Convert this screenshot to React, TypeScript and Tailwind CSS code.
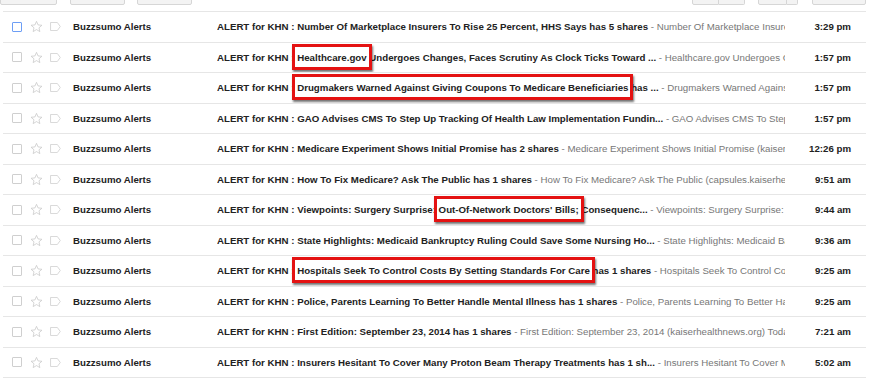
import React from "react";

type Row = {
  before: string;
  mark?: string;
  after?: string;
  snippet: string;
  time: string;
  focus?: boolean;
};

const rows: Row[] = [
  {
    before: "ALERT for KHN : Number Of Marketplace Insurers To Rise 25 Percent, HHS Says has 5 shares",
    snippet: "Number Of Marketplace Insurers To Rise 25 Percent",
    time: "3:29 pm",
    focus: true,
  },
  {
    before: "ALERT for KHN : ",
    mark: "Healthcare.gov",
    after: " Undergoes Changes, Faces Scrutiny As Clock Ticks Toward ...",
    snippet: "Healthcare.gov Undergoes Changes",
    time: "1:57 pm",
  },
  {
    before: "ALERT for KHN : ",
    mark: "Drugmakers Warned Against Giving Coupons To Medicare Beneficiaries",
    after: " has ...",
    snippet: "Drugmakers Warned Against Giving",
    time: "1:57 pm",
  },
  {
    before: "ALERT for KHN : GAO Advises CMS To Step Up Tracking Of Health Law Implementation Fundin...",
    snippet: "GAO Advises CMS To Step Up",
    time: "1:57 pm",
  },
  {
    before: "ALERT for KHN : Medicare Experiment Shows Initial Promise has 2 shares",
    snippet: "Medicare Experiment Shows Initial Promise (kaiserhealthnews.org)",
    time: "12:26 pm",
  },
  {
    before: "ALERT for KHN : How To Fix Medicare? Ask The Public has 1 shares",
    snippet: "How To Fix Medicare? Ask The Public (capsules.kaiserhealthnews.org)",
    time: "9:51 am",
  },
  {
    before: "ALERT for KHN : Viewpoints: Surgery Surprise: ",
    mark: "Out-Of-Network Doctors' Bills;",
    after: " Consequenc...",
    snippet: "Viewpoints: Surgery Surprise: Out-Of-Network",
    time: "9:44 am",
  },
  {
    before: "ALERT for KHN : State Highlights: Medicaid Bankruptcy Ruling Could Save Some Nursing Ho...",
    snippet: "State Highlights: Medicaid Bankruptcy",
    time: "9:36 am",
  },
  {
    before: "ALERT for KHN : ",
    mark: "Hospitals Seek To Control Costs By Setting Standards For Care",
    after: " has 1 shares",
    snippet: "Hospitals Seek To Control Costs",
    time: "9:25 am",
  },
  {
    before: "ALERT for KHN : Police, Parents Learning To Better Handle Mental Illness has 1 shares",
    snippet: "Police, Parents Learning To Better Handle",
    time: "9:25 am",
  },
  {
    before: "ALERT for KHN : First Edition: September 23, 2014 has 1 shares",
    snippet: "First Edition: September 23, 2014 (kaiserhealthnews.org) Today's",
    time: "7:21 am",
  },
  {
    before: "ALERT for KHN : Insurers Hesitant To Cover Many Proton Beam Therapy Treatments has 1 sh...",
    snippet: "Insurers Hesitant To Cover Many",
    time: "5:02 am",
  },
];

function StarIcon() {
  return (
    <svg viewBox="0 0 24 24" className="w-[13px] h-[13px] shrink-0" aria-hidden="true">
      <path
        d="M12 2.5l2.9 6.6 7.1.6-5.4 4.7 1.6 7-6.2-3.7-6.2 3.7 1.6-7L2 9.7l7.1-.6z"
        fill="none"
        stroke="#c8c8c8"
        strokeWidth="1.4"
        strokeLinejoin="miter"
      />
    </svg>
  );
}

function LabelIcon() {
  return (
    <svg viewBox="0 0 12 10" className="w-[11px] h-[9px] shrink-0" aria-hidden="true">
      <path
        d="M0.5 0.5h7.5l3.3 4.5-3.3 4.5H0.5z"
        fill="none"
        stroke="#d4d4d4"
        strokeWidth="1"
      />
    </svg>
  );
}

function Toolbar() {
  return (
    <div className="h-[5px] overflow-hidden flex items-end">
      <div className="w-[57px] h-[24px] bg-[#f3f3f3] border border-[#d6d6d6] rounded-[2px]" />
      <div className="ml-[13px] w-[55px] h-[24px] bg-[#f3f3f3] border border-[#d6d6d6] rounded-[2px]" />
      <div className="ml-[12px] w-[55px] h-[24px] bg-[#f3f3f3] border border-[#d6d6d6] rounded-[2px]" />
      <div className="ml-auto flex">
        <div className="w-[27px] h-[24px] bg-[#f3f3f3] border border-[#d6d6d6] rounded-l-[2px]" />
        <div className="w-[26px] h-[24px] bg-[#f3f3f3] border border-l-0 border-[#d6d6d6] rounded-r-[2px]" />
      </div>
      <div className="ml-[13px] flex">
        <div className="w-[29px] h-[24px] bg-[#f3f3f3] border border-[#d6d6d6] rounded-l-[2px]" />
        <div className="w-[11px] h-[24px] bg-[#f3f3f3] border border-l-0 border-[#d6d6d6] rounded-r-[2px]" />
      </div>
      <div className="ml-[14px] mr-[14px] w-[54px] h-[24px] bg-[#f3f3f3] border border-[#d6d6d6] rounded-[2px]" />
    </div>
  );
}

function MailRow({ row }: { row: Row }) {
  return (
    <div className="flex items-center h-[30.5px] border-b border-[#e6e6e6] bg-white">
      <div className="pl-[9px] flex items-center">
        <div
          className={`w-[10px] h-[10px] border rounded-[1px] bg-white ${
            row.focus ? "border-[#6d9ef5]" : "border-[#cfcfcf]"
          }`}
        />
      </div>
      <div className="ml-[8px] flex items-center">
        <StarIcon />
      </div>
      <div className="ml-[7px] flex items-center">
        <LabelIcon />
      </div>
      <div className="ml-[12px] w-[144px] shrink-0 font-bold text-[#222]">Buzzsumo Alerts</div>
      <div className="flex-1 min-w-0 self-stretch flex items-center overflow-hidden">
        <div className="whitespace-nowrap">
          <span className="font-bold text-[#222]">
            {row.before}
            {row.mark && (
              <span className="relative">
                {row.mark}
                <span className="absolute -left-[5px] -right-[5px] -top-[8px] -bottom-[7px] border-[3px] border-[#e41212] shadow-[1px_2px_2px_rgba(0,0,0,0.55)]" />
              </span>
            )}
            {row.after}
          </span>
          <span className="text-[#777]"> - {row.snippet}</span>
        </div>
      </div>
      <div className="w-[66px] shrink-0 text-right font-bold text-[#222]">{row.time}</div>
      <div className="w-[15px] shrink-0" />
    </div>
  );
}

export default function App() {
  return (
    <div
      className="w-[880px] h-[378px] overflow-hidden bg-white text-[9.7px] leading-[11px]"
      style={{ fontFamily: '"Liberation Sans", Arial, sans-serif' }}
    >
      <Toolbar />
      <div className="mt-[6px] ml-[3px] w-[863px] border-t border-[#e6e6e6]">
        {rows.map((r, i) => (
          <MailRow key={i} row={r} />
        ))}
      </div>
    </div>
  );
}
